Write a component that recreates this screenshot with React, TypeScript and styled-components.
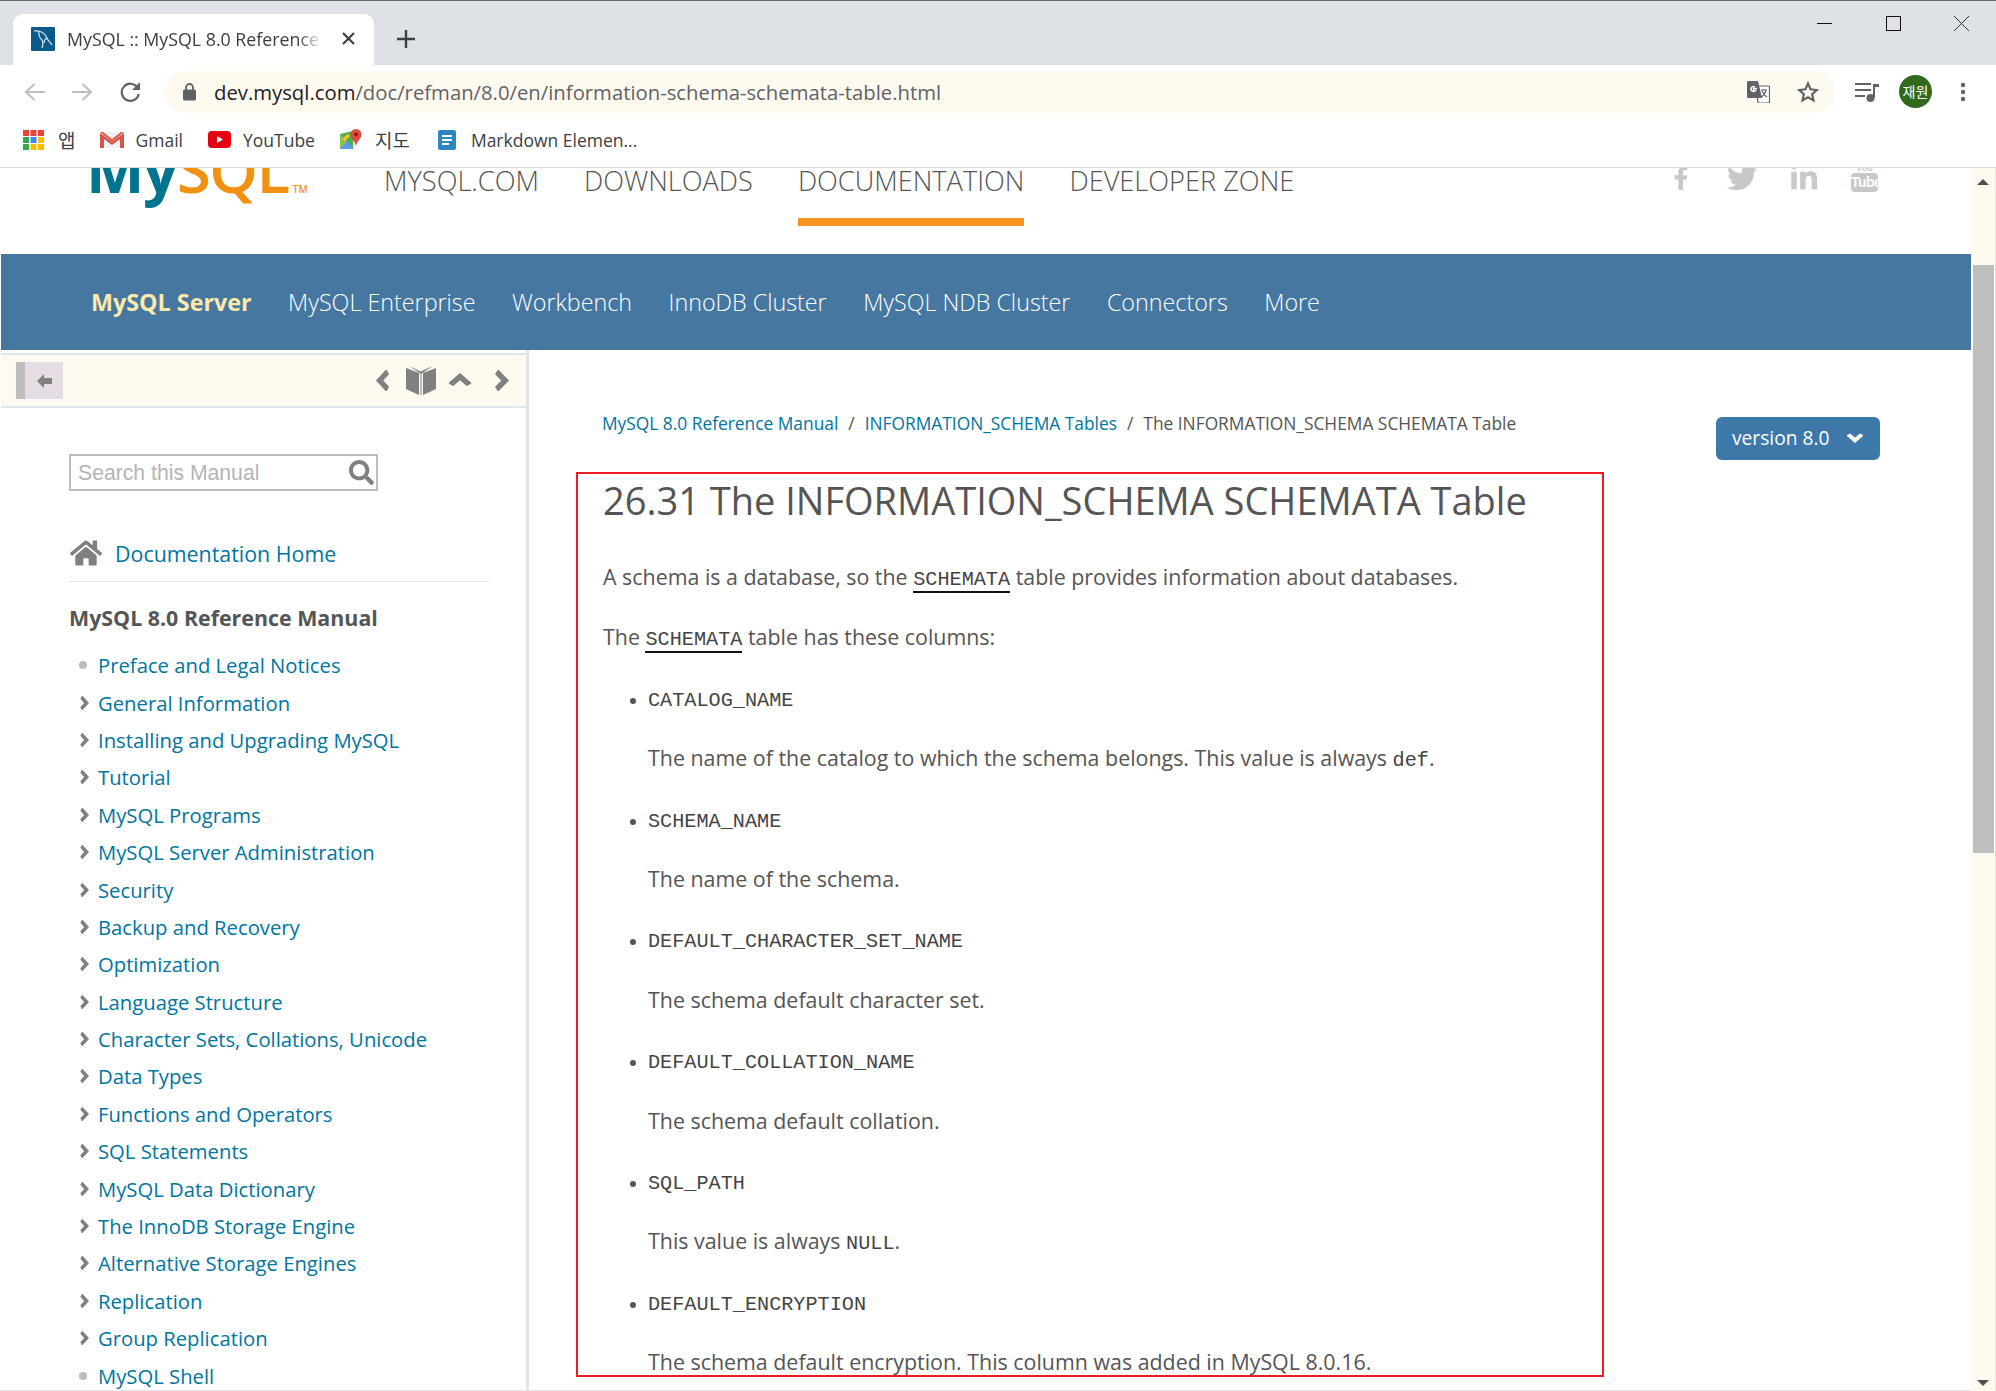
import React from 'react'
import styled, { createGlobalStyle } from 'styled-components'
import { FaHome, FaSearch, FaTwitter, FaLinkedinIn, FaFacebookF } from 'react-icons/fa'

const sans = `"Open Sans", "Noto Sans", sans-serif`

const GlobalStyle = createGlobalStyle`
    html, body {
        margin: 0;
        padding: 0;
        background: #fff;
    }
    body {
        font-family: ${sans};
    }
`

const chevronPaths = {
    left: 'M78 8L24 50l54 42',
    right: 'M22 8l54 42-54 42',
    up: 'M8 78L50 24l42 54',
    down: 'M8 22l42 54 42-54',
}

const Chevron: React.FunctionComponent<{ dir: keyof typeof chevronPaths; w: number; h: number; className?: string }> = ({ dir, w, h, className }) => (
    <svg className={className} width={w} height={h} viewBox="0 0 100 100" preserveAspectRatio="none">
        <path d={chevronPaths[dir]} fill="none" stroke="currentColor" strokeWidth="30" />
    </svg>
)

const Bookmark: React.FunctionComponent<{ icon: React.ReactNode; label: string; gap: number; hangul?: boolean }> = ({ icon, label, gap, hangul }) => (
    <BookmarkItem $gap={gap} $hangul={hangul}>
        {icon}
        <span>{label}</span>
    </BookmarkItem>
)

const AppsIcon = () => {
    const colors = ['#ea4335', '#ea4335', '#ea4335', '#34a853', '#4285f4', '#fbbc05', '#34a853', '#fbbc05', '#fbbc05']
    return (
        <svg width="21" height="20" viewBox="0 0 21 20">
            {colors.map((c, i) => (
                <rect key={i} x={(i % 3) * 7.5} y={Math.floor(i / 3) * 7} width="6" height="6" fill={c} />
            ))}
        </svg>
    )
}

const GmailIcon = () => (
    <svg width="24" height="16" viewBox="0 0 24 16">
        <rect x="0" y="0" width="24" height="16" fill="#f1f1f1" />
        <path d="M0 16V1l12 9 12-9v15h-4V7l-8 6-8-6v9z" fill="#d9534a" />
        <path d="M0 0h3l9 7 9-7h3L12 10z" fill="#e05a4e" />
    </svg>
)

const YoutubeIcon = () => (
    <svg width="23" height="17" viewBox="0 0 23 17">
        <rect width="23" height="17" rx="4" fill="#e60012" />
        <path d="M9 5l6 3.5L9 12z" fill="#fff" />
    </svg>
)

const MapsIcon = () => (
    <svg width="22" height="22" viewBox="0 0 22 22">
        <path d="M0 5l13-3v18H0z" fill="#4caf50" />
        <path d="M0 5l13 15H0z" fill="#8bc34a" />
        <path d="M0 20l7-8 7 8z" fill="#5b9cf0" />
        <path d="M3 9l5-4 2 2-6 6z" fill="#fbc02d" />
        <path d="M16 0a5.5 5.5 0 0 1 5.500 5.500C21.500 9.500 17 12 16 17c-1-5-5.500-7.500-5.500-11.500A5.500 5.500 0 0 1 16 0z" fill="#e04a3f" />
        <circle cx="16" cy="5.500" r="2" fill="#8f1f18" />
    </svg>
)

const DocIcon = () => (
    <svg width="21" height="20" viewBox="-3 0 21 20">
        <rect width="18" height="20" rx="2" fill="#2d86bd" />
        <path d="M4 6h10M4 10h10M4 14h7" stroke="#fff" strokeWidth="2" />
    </svg>
)

const sideItems = [
    'Preface and Legal Notices', 'General Information', 'Installing and Upgrading MySQL', 'Tutorial',
    'MySQL Programs', 'MySQL Server Administration', 'Security', 'Backup and Recovery', 'Optimization',
    'Language Structure', 'Character Sets, Collations, Unicode', 'Data Types', 'Functions and Operators',
    'SQL Statements', 'MySQL Data Dictionary', 'The InnoDB Storage Engine', 'Alternative Storage Engines',
    'Replication', 'Group Replication', 'MySQL Shell',
]

const leafItems = ['Preface and Legal Notices', 'MySQL Shell']

export default function App() {
    const columns: { name: string; text: React.ReactNode }[] = [
        { name: 'CATALOG_NAME', text: <>The name of the catalog to which the schema belongs. This value is always <Code>def</Code>.</> },
        { name: 'SCHEMA_NAME', text: 'The name of the schema.' },
        { name: 'DEFAULT_CHARACTER_SET_NAME', text: 'The schema default character set.' },
        { name: 'DEFAULT_COLLATION_NAME', text: 'The schema default collation.' },
        { name: 'SQL_PATH', text: <>This value is always <Code>NULL</Code>.</> },
        { name: 'DEFAULT_ENCRYPTION', text: 'The schema default encryption. This column was added in MySQL 8.0.16.' },
    ]

    return (
        <Root>
            <GlobalStyle />
            <TabStrip>
                <Tab>
                    <svg width="24" height="24" viewBox="0 0 24 24">
                        <rect width="24" height="24" rx="1" fill="#0b5a8c" />
                        <path d="M3 4c6-1 11 2 13 7 1 3 3 4 5 7M8 4c-1 4 1 7 3 9 1 2 1 5 0 8M16 11c-2 1-3 3-3 5" stroke="#d8e6ee" strokeWidth="1.200" fill="none" />
                    </svg>
                    <TabTitle>MySQL :: MySQL 8.0 Reference Manual</TabTitle>
                    <svg width="13" height="13" viewBox="0 0 13 13">
                        <path d="M1 1l11 11M12 1L1 12" stroke="#3c4043" strokeWidth="2.200" />
                    </svg>
                </Tab>
                <NewTab>
                    <svg width="18" height="18" viewBox="0 0 18 18">
                        <path d="M9 0v18M0 9h18" stroke="#3c4043" strokeWidth="2.400" />
                    </svg>
                </NewTab>
                <WindowControls>
                    <svg width="15" height="15" viewBox="0 0 15 15"><path d="M0 7.500h15" stroke="#111" strokeWidth="1" /></svg>
                    <svg width="15" height="15" viewBox="0 0 15 15"><rect x="0.500" y="0.500" width="14" height="14" fill="none" stroke="#111" /></svg>
                    <svg width="15" height="15" viewBox="0 0 15 15"><path d="M0 0l15 15M15 0L0 15" stroke="#333" strokeWidth="1" /></svg>
                </WindowControls>
            </TabStrip>

            <Toolbar>
                <NavIcons>
                    <svg width="21" height="20" viewBox="0 0 21 20"><path d="M21 10H3M10.500 2L2 10l8.500 8" stroke="#bdc1c6" strokeWidth="2.200" fill="none" /></svg>
                    <svg width="21" height="20" viewBox="0 0 21 20"><path d="M0 10h18M10.500 2L19 10l-8.500 8" stroke="#bdc1c6" strokeWidth="2.200" fill="none" /></svg>
                    <svg width="22" height="22" viewBox="0 0 22 22"><path d="M18.500 6.500A8.600 8.600 0 1 0 19.800 13" stroke="#5f6368" strokeWidth="2.200" fill="none" /><path d="M21 1v8h-8z" fill="#5f6368" /></svg>
                </NavIcons>
                <Omnibox>
                    <svg width="13" height="18" viewBox="0 0 13 18">
                        <path d="M3 7V4.500a3.500 3.500 0 0 1 7 0V7" stroke="#5f6368" strokeWidth="1.800" fill="none" />
                        <rect y="6.500" width="13" height="11" rx="1.500" fill="#5f6368" />
                    </svg>
                    <Url><b>dev.mysql.com</b>/doc/refman/8.0/en/information-schema-schemata-table.html</Url>
                    <OmniboxIcons>
                        <svg width="23" height="22" viewBox="0 0 23 22">
                            <path d="M9 5h12.500a1 1 0 0 1 1 1v15a1 1 0 0 1-1 1H11z" fill="#fff" stroke="#5f6368" strokeWidth="1.200" />
                            <path d="M1.500 0H11l4 17H1.500A1.500 1.500 0 0 1 0 15.500v-14A1.500 1.500 0 0 1 1.500 0z" fill="#5f6368" />
                            <path d="M10 7.500H6.500V9.500H8.500A2.500 2.500 0 1 1 8 6" stroke="#fff" strokeWidth="1.400" fill="none" />
                            <path d="M14 9h6M17 8v1M19 9c-1 4-3 6-5 7M15 10c1 3 3 5 5 6" stroke="#5f6368" strokeWidth="1.200" fill="none" />
                        </svg>
                        <svg width="22" height="22" viewBox="0 0 22 22">
                            <path d="M11 2.500l2.600 5.800 6.300.7-4.700 4.200 1.300 6.200L11 16.300l-5.500 3.100 1.300-6.200L2.100 9l6.300-.7z" fill="none" stroke="#5f6368" strokeWidth="2.200" />
                        </svg>
                    </OmniboxIcons>
                </Omnibox>
                <ProfileIcons>
                    <svg width="24" height="20" viewBox="0 0 24 20">
                        <path d="M0 2h16M0 8h16M0 14h10" stroke="#5f6368" strokeWidth="2" />
                        <path d="M19 3v13" stroke="#5f6368" strokeWidth="2" />
                        <path d="M18 2h6v3h-6z" fill="#5f6368" />
                        <circle cx="15.500" cy="16" r="4" fill="#5f6368" />
                    </svg>
                    <Avatar>재원</Avatar>
                    <svg width="6" height="20" viewBox="0 0 6 20">
                        <circle cx="3" cy="3" r="2.200" fill="#5f6368" />
                        <circle cx="3" cy="10" r="2.200" fill="#5f6368" />
                        <circle cx="3" cy="17" r="2.200" fill="#5f6368" />
                    </svg>
                </ProfileIcons>
            </Toolbar>

            <BookmarkBar>
                <Bookmark icon={<AppsIcon />} label="앱" gap={14} hangul />
                <Bookmark icon={<GmailIcon />} label="Gmail" gap={11} />
                <Bookmark icon={<YoutubeIcon />} label="YouTube" gap={12} />
                <Bookmark icon={<MapsIcon />} label="지도" gap={13} hangul />
                <Bookmark icon={<DocIcon />} label="Markdown Elemen..." gap={15} />
            </BookmarkBar>

            <Viewport>
                <Page>
                    <Header>
                        <Logo><MyPart>My</MyPart><SqlPart>SQL</SqlPart><Tm>TM</Tm></Logo>
                        <TopNav>
                            <TopLink>MYSQL.COM</TopLink>
                            <TopLink>DOWNLOADS</TopLink>
                            <TopLink $active>DOCUMENTATION</TopLink>
                            <TopLink>DEVELOPER ZONE</TopLink>
                        </TopNav>
                        <Social>
                            <FacebookMark size={24} />
                            <FaTwitter size={30} />
                            <FaLinkedinIn size={30} />
                            <YoutubeMark><small>You</small><span>Tube</span></YoutubeMark>
                        </Social>
                    </Header>

                    <ProductBar>
                        <ProductLink $active>MySQL Server</ProductLink>
                        <ProductLink>MySQL Enterprise</ProductLink>
                        <ProductLink>Workbench</ProductLink>
                        <ProductLink>InnoDB Cluster</ProductLink>
                        <ProductLink>MySQL NDB Cluster</ProductLink>
                        <ProductLink>Connectors</ProductLink>
                        <ProductLink>More</ProductLink>
                    </ProductBar>

                    <Columns>
                        <Sidebar>
                            <SideTools>
                                <Collapse>
                                    <svg width="15" height="14" viewBox="0 0 15 14">
                                        <path d="M0 7l7-7v4h8v6H7v4z" fill="#808080" />
                                    </svg>
                                </Collapse>
                                <SidePager>
                                    <Chevron dir="left" w={15} h={21} />
                                    <svg width="30" height="29" viewBox="0 0 30 29">
                                        <path d="M0 2l13 5v22L2 24l-2-1z" fill="#808080" />
                                        <path d="M30 2L17 7v22l11-5 2-1z" fill="#808080" />
                                        <path d="M3 0l11.500 5.500L27 0l-12 8z" fill="#808080" />
                                        <path d="M15 7v22" stroke="#808080" strokeWidth="1" />
                                    </svg>
                                    <PagerUp dir="up" w={22} h={15} />
                                    <Chevron dir="right" w={16} h={21} />
                                </SidePager>
                            </SideTools>
                            <SideBody>
                                <SearchBox>
                                    <span>Search this Manual</span>
                                    <FaSearch size={25} />
                                </SearchBox>
                                <HomeRow>
                                    <FaHome size={32} />
                                    <SideLinkBig>Documentation Home</SideLinkBig>
                                </HomeRow>
                                <SideTitle>MySQL 8.0 Reference Manual</SideTitle>
                                <SideList>
                                    {sideItems.map((item) => (
                                        <SideItem key={item}>
                                            <SideMark>
                                                {leafItems.includes(item) ? <LeafDot /> : <Chevron dir="right" w={10} h={14} />}
                                            </SideMark>
                                            <span>{item}</span>
                                        </SideItem>
                                    ))}
                                </SideList>
                            </SideBody>
                        </Sidebar>

                        <Main>
                            <TopRow>
                                <Crumbs>
                                    <CrumbLink>MySQL 8.0 Reference Manual</CrumbLink>
                                    <Sep>/</Sep>
                                    <CrumbLink>INFORMATION_SCHEMA Tables</CrumbLink>
                                    <Sep>/</Sep>
                                    <span>The INFORMATION_SCHEMA SCHEMATA Table</span>
                                </Crumbs>
                                <VersionButton>
                                    <span>version 8.0</span>
                                    <Chevron dir="down" w={16} h={11} />
                                </VersionButton>
                            </TopRow>
                            <Article>
                                <Title>26.31 The INFORMATION_SCHEMA SCHEMATA Table</Title>
                                <Para>A schema is a database, so the <CodeLink>SCHEMATA</CodeLink> table provides information about databases.</Para>
                                <Para>The <CodeLink>SCHEMATA</CodeLink> table has these columns:</Para>
                                <ColumnList>
                                    {columns.map((col) => (
                                        <li key={col.name}>
                                            <Para><Code>{col.name}</Code></Para>
                                            <Para>{col.text}</Para>
                                        </li>
                                    ))}
                                </ColumnList>
                            </Article>
                        </Main>
                    </Columns>
                </Page>

                <Scrollbar>
                    <ArrowUp />
                    <Thumb />
                    <ArrowDown />
                </Scrollbar>
            </Viewport>
        </Root>
    )
}

const Root = styled.div`
    width: 1996px;
    height: 1391px;
    overflow: hidden;
    display: flex;
    flex-direction: column;
    background: #fff;
`

const TabStrip = styled.div`
    flex: 0 0 65px;
    box-sizing: border-box;
    border-top: 1px solid #666;
    background: #dee1e6;
    display: flex;
    align-items: flex-end;
    padding-left: 13px;
`

const Tab = styled.div`
    width: 361px;
    height: 51px;
    box-sizing: border-box;
    background: #fff;
    border-radius: 10px 10px 0 0;
    display: flex;
    align-items: center;
    padding: 0 19px 2px 18px;
    gap: 12px;
`

const TabTitle = styled.div`
    flex: 1;
    overflow: hidden;
    white-space: nowrap;
    font-size: 17.800px;
    color: #3c4043;
    -webkit-mask-image: linear-gradient(to right, #000 88%, transparent 97%);
    mask-image: linear-gradient(to right, #000 88%, transparent 97%);
`

const NewTab = styled.div`
    height: 51px;
    box-sizing: border-box;
    padding-bottom: 2px;
    display: flex;
    align-items: center;
    margin-left: 23px;
`

const WindowControls = styled.div`
    margin-left: auto;
    align-self: flex-start;
    display: flex;
    gap: 53.500px;
    padding: 15px 27px 0 0;
`

const Toolbar = styled.div`
    flex: 0 0 48px;
    display: flex;
    align-items: flex-start;
    padding-top: 6px;
    box-sizing: border-box;
    background: #fff;
`

const NavIcons = styled.div`
    width: 164px;
    height: 42px;
    flex: none;
    box-sizing: border-box;
    padding-left: 24px;
    display: flex;
    align-items: center;
    gap: 26.500px;
`

const Omnibox = styled.div`
    width: 1670px;
    height: 42px;
    flex: none;
    box-sizing: border-box;
    background: #fffaf0;
    border-radius: 21px;
    display: flex;
    align-items: center;
    padding: 0 15px 0 19px;
`

const Url = styled.div`
    margin-left: 18px;
    font-size: 20.300px;
    color: #5f6368;
    white-space: nowrap;

    b {
        font-weight: 400;
        color: #202124;
    }
`

const OmniboxIcons = styled.div`
    margin-left: auto;
    display: flex;
    align-items: center;
    gap: 27px;
`

const ProfileIcons = styled.div`
    height: 42px;
    flex: 1;
    display: flex;
    align-items: center;
    padding-left: 21px;
    gap: 20px;
`

const Avatar = styled.div`
    width: 33px;
    height: 33px;
    border-radius: 50%;
    background: #2f6b1b;
    color: #fff;
    font-size: 14px;
    font-family: "Noto Sans CJK KR", sans-serif;
    display: flex;
    align-items: center;
    justify-content: center;
    margin: -2px 8px 0 0;
`

const BookmarkBar = styled.div`
    flex: 0 0 55px;
    box-sizing: border-box;
    background: #fff;
    border-bottom: 1px solid #dadce0;
    display: flex;
    align-items: center;
    padding: 0 0 1px 23px;
    gap: 25px;
`

const BookmarkItem = styled.div<{ $gap: number; $hangul?: boolean }>`
    display: flex;
    align-items: center;
    gap: ${(p) => p.$gap}px;
    font-size: ${(p) => (p.$hangul ? 19 : 17.5)}px;
    color: #3c4043;
    font-family: "Open Sans", "Noto Sans CJK KR", sans-serif;
    white-space: nowrap;
`

const Viewport = styled.div`
    flex: 1;
    min-height: 0;
    display: flex;
`

const Page = styled.div`
    flex: 1;
    min-width: 0;
    box-sizing: border-box;
    padding-left: 1px;
    display: flex;
    flex-direction: column;
    overflow: hidden;
    border-bottom: 1px solid #dfe5ea;
`

const Header = styled.header`
    flex: 0 0 86px;
    display: flex;
    align-items: flex-start;
    overflow: hidden;
    padding-left: 85px;
`

const Logo = styled.div`
    width: 298px;
    flex: none;
    margin-top: -49px;
    font-size: 62px;
    line-height: 100px;
    white-space: nowrap;
    letter-spacing: -1.500px;
`

const MyPart = styled.span`
    color: #00758f;
    font-weight: 700;
`

const SqlPart = styled.span`
    color: #f29111;
    font-weight: 600;
`

const Tm = styled.span`
    color: #f29111;
    font-size: 10px;
    font-weight: 600;
    letter-spacing: 0;
    margin-left: 4px;
`

const TopNav = styled.nav`
    display: flex;
    gap: 45px;
`

const TopLink = styled.div<{ $active?: boolean }>`
    height: 58px;
    box-sizing: border-box;
    font-size: 27.200px;
    font-weight: 300;
    line-height: 26px;
    color: #555;
    white-space: nowrap;
    border-bottom: 8px solid ${(p) => (p.$active ? '#f6931e' : 'transparent')};
`

const Social = styled.div`
    margin-left: auto;
    margin-right: 93px;
    margin-top: -5px;
    height: 30px;
    display: flex;
    align-items: center;
    gap: 32px;
    color: #c8c8c8;
`

const FacebookMark = styled(FaFacebookF)`
    margin-right: 2px;
    align-self: flex-end;
    margin-bottom: 3px;
`

const YoutubeMark = styled.div`
    width: 27px;
    align-self: flex-end;
    margin-bottom: 1px;
    display: flex;
    flex-direction: column;
    align-items: center;
    font-family: "Liberation Sans", sans-serif;
    font-weight: 700;
    line-height: 10px;

    small {
        font-size: 9px;
        color: #c8c8c8;
    }

    span {
        width: 27px;
        text-align: center;
        font-size: 14px;
        letter-spacing: -0.500px;
        line-height: 19px;
        background: #c8c8c8;
        color: #fff;
        border-radius: 4px;
    }
`

const ProductBar = styled.nav`
    flex: 0 0 96px;
    background: #4577a1;
    display: flex;
    align-items: center;
    padding-left: 90px;
    gap: 36.500px;
`

const ProductLink = styled.div<{ $active?: boolean }>`
    font-size: 23.300px;
    font-weight: ${(p) => (p.$active ? 700 : 300)};
    color: ${(p) => (p.$active ? '#fde9a9' : '#fff')};
    white-space: nowrap;
`

const Columns = styled.div`
    flex: 1;
    min-height: 0;
    display: flex;
`

const Sidebar = styled.aside`
    flex: 0 0 528px;
    box-sizing: border-box;
    border-right: 3px solid #dfe5ea;
    padding-top: 3px;
    overflow: hidden;
`

const SideTools = styled.div`
    height: 55px;
    box-sizing: border-box;
    background: #fffaf0;
    border-top: 2px solid #dfe5ea;
    border-bottom: 2px solid #dfe5ea;
    display: flex;
    align-items: center;
    padding: 0 17px 0 15px;
`

const Collapse = styled.div`
    width: 47px;
    height: 37px;
    box-sizing: border-box;
    background: #e5dde3;
    border-left: 9px solid #bdbdbd;
    display: flex;
    align-items: center;
    justify-content: center;
`

const SidePager = styled.div`
    margin-left: auto;
    display: flex;
    align-items: center;
    gap: 15px;
    color: #808080;
`

const PagerUp = styled(Chevron)`
    margin: 0 7px 0 -2px;
`

const SideBody = styled.div`
    padding: 46px 0 0 68px;
`

const SearchBox = styled.div`
    width: 309px;
    height: 37px;
    box-sizing: border-box;
    border: 2px solid #bbb;
    display: flex;
    align-items: center;
    justify-content: space-between;
    padding: 0 2px 0 7px;
    font-family: "Liberation Sans", Arial, sans-serif;
    font-size: 21.200px;
    color: #b4b4b4;

    svg {
        color: #808080;
    }
`

const HomeRow = styled.div`
    width: 420px;
    height: 91px;
    box-sizing: border-box;
    border-bottom: 1px solid #dfe5ea;
    display: flex;
    align-items: center;
    gap: 13px;
    padding: 34px 0 0 1px;
    color: #808080;
`

const SideLinkBig = styled.span`
    font-size: 21.400px;
    color: #00759f;
`

const SideTitle = styled.div`
    margin-top: 22px;
    font-size: 21.400px;
    line-height: 28px;
    font-weight: 700;
    color: #555;
    white-space: nowrap;
`

const SideList = styled.div`
    margin-top: 14.500px;
`

const SideItem = styled.div`
    display: flex;
    align-items: center;
    height: 37.400px;
    font-size: 20.250px;
    color: #00759f;
    white-space: nowrap;
`

const SideMark = styled.span`
    width: 29px;
    flex: none;
    display: flex;
    align-items: center;
    padding-left: 10px;
    box-sizing: border-box;
    color: #808080;
`

const LeafDot = styled.i`
    width: 8px;
    height: 8px;
    border-radius: 50%;
    background: #bdbdbd;
`

const Main = styled.main`
    flex: 1;
    min-width: 0;
    padding-left: 47px;
`

const TopRow = styled.div`
    height: 122px;
    box-sizing: border-box;
    display: flex;
    justify-content: space-between;
    align-items: flex-start;
    padding: 60px 91px 0 26px;
`

const Crumbs = styled.div`
    font-size: 17.350px;
    line-height: 26px;
    color: #555;
    white-space: nowrap;
    display: flex;
    gap: 0;
`

const CrumbLink = styled.span`
    color: #00759f;
`

const Sep = styled.span`
    padding: 0 10px;
`

const VersionButton = styled.div`
    width: 164px;
    height: 43px;
    margin-top: 7px;
    box-sizing: border-box;
    background: #3d78a8;
    border-radius: 6px;
    color: #fff;
    font-size: 19.200px;
    display: flex;
    align-items: center;
    justify-content: space-between;
    padding: 0 17px 3px 16px;
`

const Article = styled.article`
    width: 1028px;
    height: 905px;
    box-sizing: border-box;
    border: 2px solid #ed1c24;
    padding: 1px 0 0 25px;
    overflow: hidden;
    color: #555;
`

const Title = styled.h1`
    margin: 0 0 37px;
    font-size: 38px;
    line-height: 50px;
    font-weight: 400;
    white-space: nowrap;
`

const Para = styled.p`
    margin: 0 0 30.400px;
    font-size: 21.400px;
    line-height: 30px;
    white-space: nowrap;
`

const Code = styled.code`
    font-family: "Liberation Mono", "Courier New", monospace;
    font-size: 20.200px;
    line-height: 1;
    color: #444;
`

const CodeLink = styled(Code)`
    color: #444;
    border-bottom: 2px solid #111;
`

const ColumnList = styled.ul`
    margin: 0;
    padding: 0 0 0 45px;
`

const Scrollbar = styled.div`
    flex: 0 0 25px;
    background: #fffaf0;
    display: flex;
    flex-direction: column;
    align-items: center;
    border-right: 1px solid #e6e6e6;
    box-sizing: border-box;
`

const Thumb = styled.div`
    width: 21px;
    height: 588px;
    margin-top: 80px;
    background: #bfbfbf;
`

const ArrowUp = styled.i`
    margin-top: 11px;
    width: 0;
    height: 0;
    border-left: 6px solid transparent;
    border-right: 6px solid transparent;
    border-bottom: 6px solid #505050;
`

const ArrowDown = styled.i`
    margin-top: auto;
    margin-bottom: 5px;
    width: 0;
    height: 0;
    border-left: 6px solid transparent;
    border-right: 6px solid transparent;
    border-top: 6px solid #505050;
`
